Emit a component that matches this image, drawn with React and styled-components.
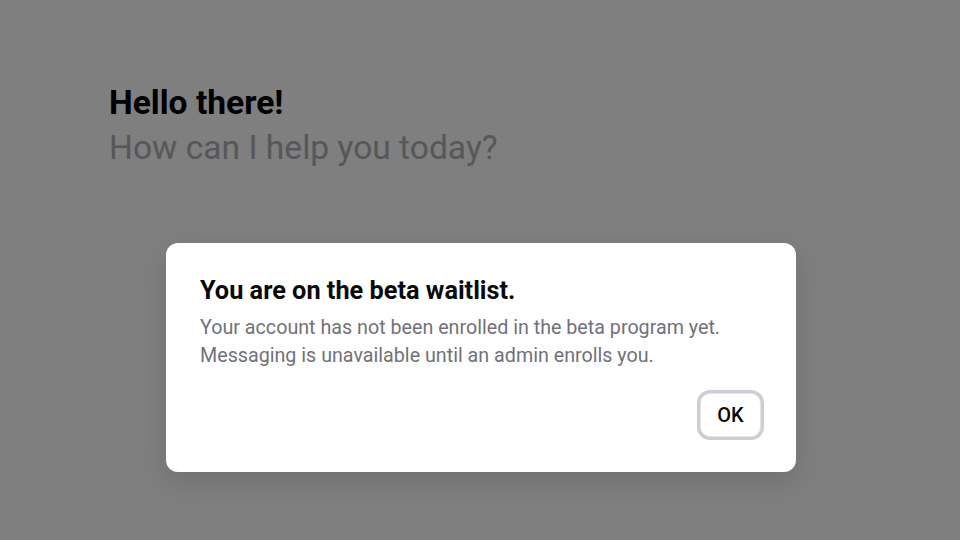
import React from 'react';
import styled, { createGlobalStyle } from 'styled-components';

const GlobalStyle = createGlobalStyle`
  html, body {
    margin: 0;
    padding: 0;
    width: 960px;
    height: 540px;
    overflow: hidden;
    background: #ffffff;
    font-family: Roboto, "Liberation Sans", Arial, sans-serif;
  }
`;

const Page = styled.div`
  position: relative;
  width: 960px;
  height: 540px;
  padding: 81px 0 0 109px;
  box-sizing: border-box;
`;
const Greeting = styled.h1`
  margin: 0;
  font-size: 33.6px;
  line-height: 44px;
  font-weight: 700;
  color: #000000;
`;
const Subtitle = styled.p`
  margin: 1px 0 0;
  font-size: 33.6px;
  line-height: 44px;
  font-weight: 400;
  color: #aeaeb4;
`;

const Overlay = styled.div`
  position: absolute;
  inset: 0;
  background: rgba(0, 0, 0, 0.5);
  display: flex;
  justify-content: center;
  align-items: flex-start;
  padding-top: 243px;
  padding-left: 2px;
  box-sizing: border-box;
`;
const Dialog = styled.div`
  width: 630px;
  box-sizing: border-box;
  background: #ffffff;
  border-radius: 12px;
  padding: 31px 32px 32px 34px;
  box-shadow: 0 10px 30px rgba(0, 0, 0, 0.12);
  display: flex;
  flex-direction: column;
`;
const Title = styled.h2`
  margin: 0;
  font-size: 25.3px;
  line-height: 34px;
  font-weight: 700;
  color: #0a0a0a;
`;
const Body = styled.p`
  margin: 6px 0 0;
  font-size: 19.7px;
  line-height: 28px;
  color: #71717a;
`;
const Actions = styled.div`
  display: flex;
  justify-content: flex-end;
  margin-top: 20px;
`;
const Button = styled.button`
  height: 44px;
  min-width: 61px;
  padding: 0 16px;
  margin: 3px;
  border: 1px solid #e4e4e7;
  border-radius: 10px;
  background: #ffffff;
  box-shadow: 0 0 0 3px #cdcdd5;
  font-family: inherit;
  font-size: 20px;
  font-weight: 500;
  color: #0a0a0a;
  outline: none;
`;

export default function App() {
  return (
    <>
      <GlobalStyle />
      <Page>
        <Greeting>Hello there!</Greeting>
        <Subtitle>How can I help you today?</Subtitle>
        <Overlay>
          <Dialog>
            <Title>You are on the beta waitlist.</Title>
            <Body>
              Your account has not been enrolled in the beta program yet.
              <br />
              Messaging is unavailable until an admin enrolls you.
            </Body>
            <Actions>
              <Button>OK</Button>
            </Actions>
          </Dialog>
        </Overlay>
      </Page>
    </>
  );
}
